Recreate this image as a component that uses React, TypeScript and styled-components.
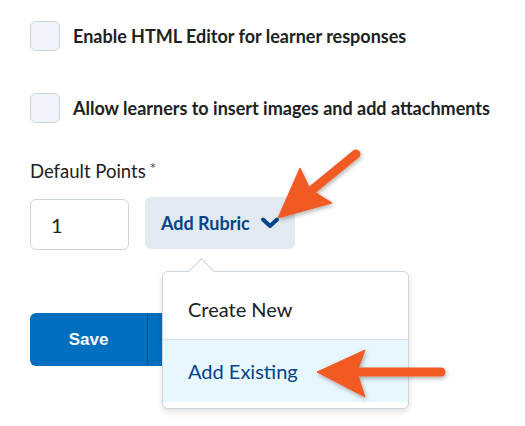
import React from "react";
import styled, { createGlobalStyle } from "styled-components";

const Global = createGlobalStyle`
  html, body { margin: 0; padding: 0; background: #ffffff; }
  body { font-family: Lato, "Noto Sans", sans-serif; color: #202122; }
`;

const Page = styled.div`
  position: relative;
  width: 525px;
  height: 426px;
  overflow: hidden;
  padding: 21px 0 0 30px;
  box-sizing: border-box;
`;

const CheckRow = styled.label<{ $gap?: number }>`
  display: flex;
  align-items: center;
  gap: 13px;
  height: 30px;
  margin-bottom: ${(p) => p.$gap ?? 0}px;
`;

const Box = styled.span`
  width: 28px;
  height: 28px;
  border: 1px solid #cdd5dc;
  border-radius: 6px;
  background: #f1f5fb;
  flex: none;
`;

const CheckText = styled.span`
  font-family: Lato, sans-serif;
  font-weight: 700;
  font-size: 18px;
  color: #202122;
  white-space: nowrap;
`;

const FieldLabel = styled.div`
  margin-top: 34px;
  font-family: Lato, sans-serif;
  font-size: 18.5px;
  color: #202122;
  line-height: 22px;
  & span { font-size: 15px; vertical-align: 4px; margin-left: 4px; color: #494c4e; }
`;

const FieldRow = styled.div`
  display: flex;
  align-items: flex-start;
  gap: 16px;
  margin-top: 15px;
`;

const NumberInput = styled.div`
  width: 97px;
  height: 49px;
  margin-top: 2px;
  border: 1px solid #cdd5dc;
  border-radius: 6px;
  box-sizing: content-box;
  display: flex;
  align-items: center;
  font-family: Lato, sans-serif;
  font-size: 20px;
  color: #202122;
  & span { margin-left: 20px; }
`;

const MenuWrap = styled.div`
  position: relative;
`;

const RubricButton = styled.button`
  display: flex;
  align-items: center;
  gap: 10px;
  height: 52px;
  width: 150px;
  padding: 0 0 0 16px;
  border: none;
  border-radius: 6px;
  background: #e3e9f1;
  color: #004489;
  font-family: Lato, sans-serif;
  font-weight: 700;
  font-size: 18px;
  cursor: pointer;
`;

const Menu = styled.div`
  position: absolute;
  left: 17px;
  top: 74px;
  width: 245px;
  background: #fff;
  border: 1px solid #cdd5dc;
  border-radius: 6px;
  box-shadow: 0 3px 6px rgba(0, 0, 0, 0.12);
  padding: 6px 0;
  z-index: 2;
  &::before {
    content: "";
    position: absolute;
    left: 29px;
    top: -10px;
    width: 18px;
    height: 18px;
    background: #fff;
    border-left: 1px solid #cdd5dc;
    border-top: 1px solid #cdd5dc;
    transform: rotate(45deg);
  }
`;

const MenuItem = styled.div<{ $active?: boolean }>`
  position: relative;
  height: ${(p) => (p.$active ? 62 : 61)}px;
  display: flex;
  align-items: center;
  padding-left: 25px;
  font-family: Lato, sans-serif;
  font-size: 20px;
  color: ${(p) => (p.$active ? "#004489" : "#202122")};
  background: ${(p) => (p.$active ? "#e8f6fd" : "#ffffff")};
  border-top: ${(p) => (p.$active ? "1px solid #d9e0e6" : "none")};
`;

const SaveGroup = styled.div`
  display: flex;
  margin-top: 63px;
  height: 53px;
`;

const SaveButton = styled.button`
  width: 118px;
  height: 53px;
  border: none;
  border-radius: 6px 0 0 6px;
  background: #006fbf;
  color: #fff;
  font-family: "Liberation Sans", Arial, sans-serif;
  font-weight: 700;
  font-size: 17px;
  border-right: 1px solid #0a4e8c;
`;

const SaveMore = styled.button`
  width: 44px;
  height: 53px;
  border: none;
  border-radius: 0 6px 6px 0;
  background: #006fbf;
`;

const Overlay = styled.svg`
  position: absolute;
  left: 0;
  top: 0;
  pointer-events: none;
  z-index: 5;
`;

export default function App() {
  return (
    <>
      <Global />
      <Page>
        <CheckRow $gap={42}>
          <Box />
          <CheckText>Enable HTML Editor for learner responses</CheckText>
        </CheckRow>
        <CheckRow>
          <Box />
          <CheckText>Allow learners to insert images and add attachments</CheckText>
        </CheckRow>
        <FieldLabel>
          Default Points<span>*</span>
        </FieldLabel>
        <FieldRow>
          <NumberInput>
            <span>1</span>
          </NumberInput>
          <MenuWrap>
            <RubricButton>
              Add Rubric
              <svg width="20" height="12" viewBox="0 0 20 12">
                <path d="M3 2.5 L10 9 L17 2.5" fill="none" stroke="#004489" strokeWidth="4" strokeLinecap="round" strokeLinejoin="round" />
              </svg>
            </RubricButton>
            <Menu>
              <MenuItem>Create New</MenuItem>
              <MenuItem $active>Add Existing</MenuItem>
            </Menu>
          </MenuWrap>
        </FieldRow>
        <SaveGroup>
          <SaveButton>Save</SaveButton>
          <SaveMore />
        </SaveGroup>
        <Overlay width="525" height="426" viewBox="0 0 525 426">
          <defs>
            <filter id="sh" x="-20%" y="-20%" width="140%" height="140%">
              <feDropShadow dx="1" dy="2" stdDeviation="2" floodColor="#000" floodOpacity="0.3" />
            </filter>
          </defs>
          <g filter="url(#sh)" fill="#f15a24" stroke="#f15a24">
            <line x1="356" y1="154" x2="312" y2="190" strokeWidth="9" strokeLinecap="round" />
            <polygon points="278,218 300,168 310,189 332,203" strokeWidth="1" strokeLinejoin="round" />
            <line x1="441" y1="372" x2="355" y2="372" strokeWidth="9" strokeLinecap="round" />
            <polygon points="317,372 365,350 357,372 365,397" strokeWidth="1" strokeLinejoin="round" />
          </g>
        </Overlay>
      </Page>
    </>
  );
}
